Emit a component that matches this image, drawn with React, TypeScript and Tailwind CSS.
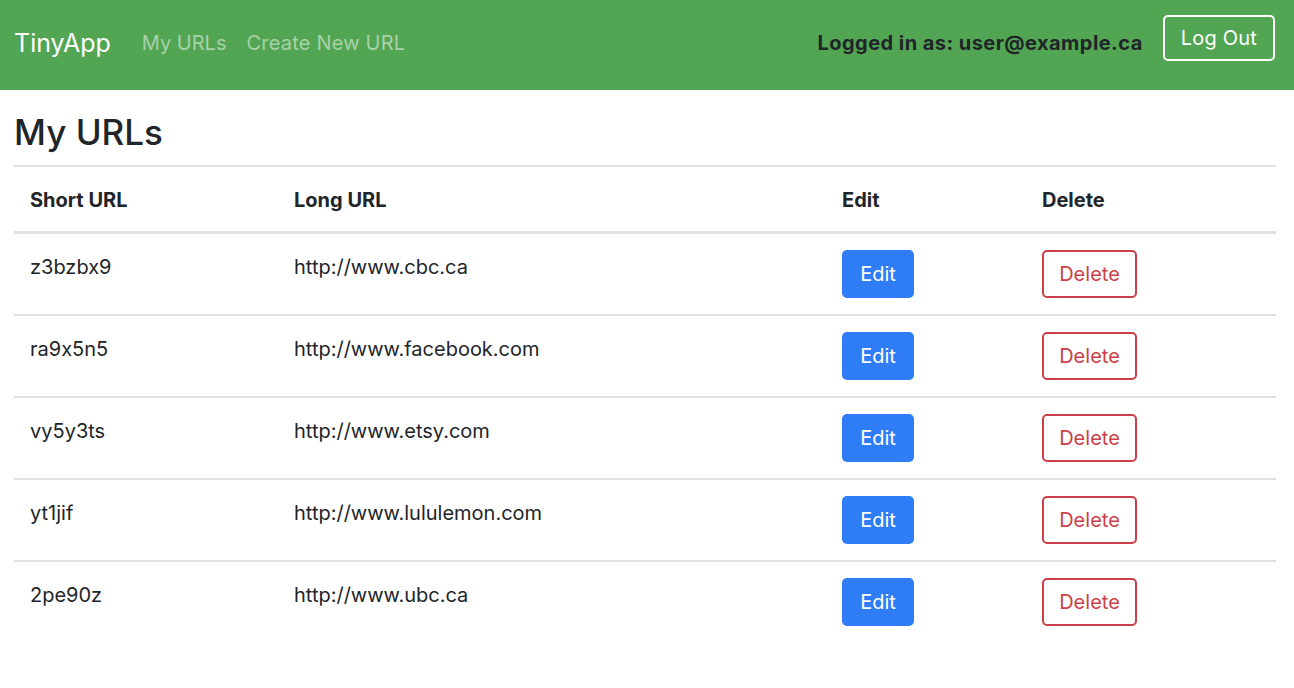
import React from "react";

const rows = [
  ["z3bzbx9", "http://www.cbc.ca"],
  ["ra9x5n5", "http://www.facebook.com"],
  ["vy5y3ts", "http://www.etsy.com"],
  ["yt1jif", "http://www.lululemon.com"],
  ["2pe90z", "http://www.ubc.ca"],
];

export default function App() {
  return (
    <div
      className="min-h-[688px] bg-white text-[#212529]"
      style={{ fontFamily: "Inter, 'Noto Sans', sans-serif", fontFeatureSettings: "'calt' 0" }}
    >
      <nav className="h-[90px] bg-[#52a552] flex items-center pl-[14px] pr-[19px] pb-[4px]">
        <span className="text-[25px] text-white mr-[21px] leading-none">TinyApp</span>
        <a className="text-[20px] text-white/50 px-[10px]">My URLs</a>
        <a className="text-[20px] text-white/50 px-[10px] tracking-[0.2px]">Create New URL</a>
        <div className="ml-auto flex items-center">
          <span className="text-[20px] font-bold text-[#212529] mr-[20px] tracking-[0.45px]">Logged in as: user@example.ca</span>
          <button className="h-[46px] px-[16px] border-2 border-white rounded-[5px] text-[20px] text-white -mt-[10px] tracking-[0.2px]">Log Out</button>
        </div>
      </nav>
      <div className="pl-[14px] pr-[18px]">
        <h2 className="text-[35px] font-medium leading-[1.2] mt-[21px] mb-[12px]">My URLs</h2>
        <table className="w-full border-collapse text-[20px]">
          <thead>
            <tr className="border-t-2 border-b-[3px] border-[#dee2e6]">
              <th className="w-[265px] text-left font-bold px-[16px] pt-[18px] pb-[16px] leading-[30px]">Short URL</th>
              <th className="w-[548px] text-left font-bold px-[15px] pt-[18px] pb-[16px] leading-[30px]">Long URL</th>
              <th className="w-[200px] text-left font-bold px-[15px] pt-[18px] pb-[16px] leading-[30px]">Edit</th>
              <th className="text-left font-bold px-[15px] pt-[18px] pb-[16px] leading-[30px]">Delete</th>
            </tr>
          </thead>
          <tbody>
            {rows.map(([s, l], i) => (
              <tr key={s} className={i > 0 ? "border-t-2 border-[#dee2e6]" : ""}>
                <td className="align-top px-[16px] pt-[18px] leading-[30px]">{s}</td>
                <td className="align-top px-[15px] pt-[18px] leading-[30px]">{l}</td>
                <td className="align-top px-[15px] pt-[16px] pb-[16px]">
                  <button className="h-[48px] w-[72px] bg-[#2f7df6] text-white rounded-[5px] text-[20px]">Edit</button>
                </td>
                <td className="align-top px-[15px] pt-[16px] pb-[16px]">
                  <button className="h-[48px] w-[95px] border-2 border-[#cc3e48] text-[#cc3e48] rounded-[5px] text-[20px]">Delete</button>
                </td>
              </tr>
            ))}
          </tbody>
        </table>
      </div>
    </div>
  );
}
